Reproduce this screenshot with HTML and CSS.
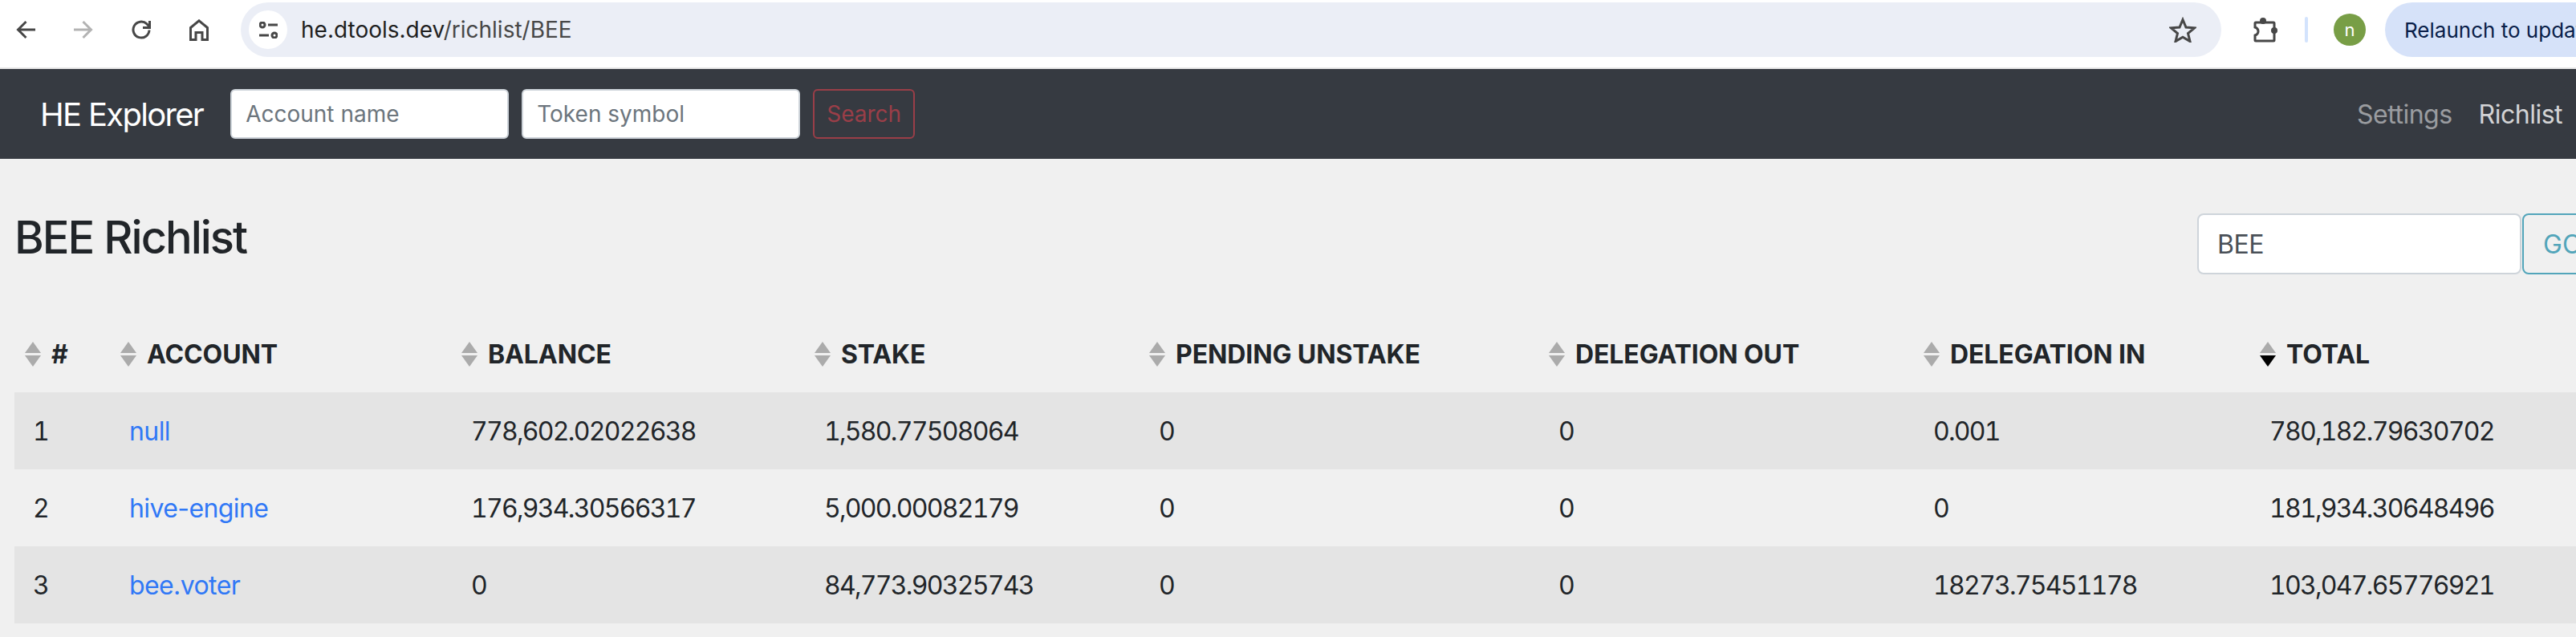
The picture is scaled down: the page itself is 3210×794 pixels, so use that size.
FILE: index.html
```html
<!DOCTYPE html>
<html lang="en">
<head>
<meta charset="utf-8">
<title>BEE Richlist</title>
<link rel="stylesheet" href="styles.css">
</head>
<body>
<header class="toolbar">
  <svg class="tb-icon" viewBox="0 0 24 24"><path class="ic" d="M24 12H3M12.5 2 2.5 12l10 10"/></svg>
  <svg class="tb-icon dim" viewBox="0 0 24 24"><path class="ic" d="M0 12h21M11.5 2l10 10-10 10"/></svg>
  <svg class="tb-icon" viewBox="0 0 24 24"><path class="ic" d="M22 12.5a10 10 0 1 1-3.2-7.8L22 8"/><path class="ic" d="M22.5 1v8.5H14"/></svg>
  <svg class="tb-icon home" viewBox="0 0 24 27"><path class="ic" d="M1.500 25.500V10.500L12 1.800l10.500 8.700v15h-6.500v-9H8v9z"/></svg>
  <div class="omnibox">
    <span class="site-chip">
      <svg class="tune" viewBox="0 0 23 21"><circle class="ic2" cx="4" cy="4" r="3"/><path class="ic2" d="M11 4h12M0 17h12"/><circle class="ic2" cx="19" cy="17" r="3"/></svg>
    </span>
    <span class="url">he.dtools.dev<span class="url-path">/richlist/BEE</span></span>
    <svg class="star" viewBox="0 0 34 32"><path class="ic" d="M17 3.500l4 9.500 10.500.8-8 6.800 2.500 10L17 25.200 8 30.600l2.500-10-8-6.800L13 13z"/></svg>
  </div>
  <svg class="puzzle" viewBox="0 0 32 32"><path class="ic" d="M5 7h22a1 1 0 0 1 1 1v21a1 1 0 0 1-1 1H5a1 1 0 0 1-1-1v-6c3-1 4-3 4-5s-1-4-4-5V8a1 1 0 0 1 1-1z"/><circle class="dot" cx="14" cy="5" r="4"/><circle class="dot" cx="28" cy="17" r="4"/></svg>
  <span class="tb-divider"></span>
  <span class="avatar">n</span>
  <span class="relaunch">Relaunch to update</span>
</header>

<nav class="navbar">
  <a class="brand">HE Explorer</a>
  <input class="nav-input" placeholder="Account name">
  <input class="nav-input" placeholder="Token symbol">
  <button class="nav-search">Search</button>
  <div class="nav-links">
    <a class="nav-link">Settings</a>
    <a class="nav-link active">Richlist</a>
  </div>
</nav>

<main class="content">
  <div class="title-row">
    <h3 class="title">BEE Richlist</h3>
    <div class="go-group">
      <input class="go-input" value="BEE">
      <button class="go-btn">GO</button>
    </div>
  </div>
  <table class="rich">
    <colgroup>
      <col class="c1"><col class="c2"><col class="c3"><col class="c4"><col class="c5"><col class="c6"><col class="c7"><col class="c8">
    </colgroup>
    <thead>
      <tr>
        <th class="first"><span class="th"><svg class="sort" viewBox="0 0 20 31"><path d="M10 0l10 14H0z"/><path d="M0 17h20L10 31z"/></svg>#</span></th>
        <th><span class="th"><svg class="sort" viewBox="0 0 20 31"><path d="M10 0l10 14H0z"/><path d="M0 17h20L10 31z"/></svg>ACCOUNT</span></th>
        <th><span class="th"><svg class="sort" viewBox="0 0 20 31"><path d="M10 0l10 14H0z"/><path d="M0 17h20L10 31z"/></svg>BALANCE</span></th>
        <th><span class="th"><svg class="sort" viewBox="0 0 20 31"><path d="M10 0l10 14H0z"/><path d="M0 17h20L10 31z"/></svg>STAKE</span></th>
        <th><span class="th"><svg class="sort" viewBox="0 0 20 31"><path d="M10 0l10 14H0z"/><path d="M0 17h20L10 31z"/></svg>PENDING UNSTAKE</span></th>
        <th><span class="th"><svg class="sort" viewBox="0 0 20 31"><path d="M10 0l10 14H0z"/><path d="M0 17h20L10 31z"/></svg>DELEGATION OUT</span></th>
        <th><span class="th"><svg class="sort" viewBox="0 0 20 31"><path d="M10 0l10 14H0z"/><path d="M0 17h20L10 31z"/></svg>DELEGATION IN</span></th>
        <th><span class="th"><svg class="sort" viewBox="0 0 20 31"><path d="M10 0l10 14H0z"/><path class="on" d="M0 17h20L10 31z"/></svg>TOTAL</span></th>
      </tr>
    </thead>
    <tbody>
      <tr><td>1</td><td class="acct-cell"><a class="acct">null</a></td><td>778,602.02022638</td><td>1,580.77508064</td><td>0</td><td>0</td><td>0.001</td><td>780,182.79630702</td></tr>
      <tr><td>2</td><td class="acct-cell"><a class="acct">hive-engine</a></td><td>176,934.30566317</td><td>5,000.00082179</td><td>0</td><td>0</td><td>0</td><td>181,934.30648496</td></tr>
      <tr><td>3</td><td class="acct-cell"><a class="acct">bee.voter</a></td><td>0</td><td>84,773.90325743</td><td>0</td><td>0</td><td>18273.75451178</td><td>103,047.65776921</td></tr>
    </tbody>
  </table>
</main>
</body>
</html>
```
FILE: styles.css
```css
* { box-sizing: border-box; }
html, body { margin: 0; padding: 0; }
body {
  width: 3210px;
  height: 794px;
  overflow: hidden;
  background: #f0f0f0;
  color: #212529;
  font-family: Inter, "Liberation Sans", sans-serif;
  font-size: 32px;
}

/* browser toolbar */
.toolbar {
  height: 86px;
  padding: 4px 0 14px 20px;
  background: #fff;
  border-bottom: 2px solid #e8e8e8;
  display: flex;
  align-items: center;
  overflow: hidden;
}
.ic { fill: none; stroke: #474747; stroke-width: 3; }
.ic2 { fill: none; stroke: #474747; stroke-width: 3; }
.dot { fill: #474747; }
.tb-icon { width: 24px; height: 24px; margin-right: 48px; flex: none; }
.tb-icon.dim .ic { stroke: #b3b3b3; }
.tb-icon.home { height: 27px; margin-right: 40px; }
.omnibox {
  flex: 0 0 2468px;
  height: 68px;
  border-radius: 34px;
  background: #ebeef6;
  display: flex;
  align-items: center;
  padding: 0 31px 0 10px;
}
.site-chip {
  width: 48px;
  height: 48px;
  border-radius: 50%;
  background: #fff;
  display: flex;
  align-items: center;
  justify-content: center;
}
.tune { width: 23px; height: 21px; }
.url { margin-left: 17px; font-size: 28px; color: #1f1f1f; }
.url-path { color: #474747; }
.star { width: 34px; height: 32px; margin-left: auto; }
.puzzle { width: 32px; height: 32px; margin-left: 38px; flex: none; }
.tb-divider { width: 4px; height: 32px; margin-left: 34px; border-radius: 2px; background: #d3e3fd; flex: none; }
.avatar {
  width: 40px;
  height: 40px;
  margin-left: 32px;
  border-radius: 50%;
  background: #789e46;
  color: #fff;
  font-size: 22px;
  display: flex;
  align-items: center;
  justify-content: center;
  flex: none;
}
.relaunch {
  margin-left: 24px;
  height: 68px;
  padding: 0 40px 0 24px;
  border-radius: 34px;
  background: #d6e2f9;
  color: #0a1f4a;
  font-size: 26px;
  display: flex;
  align-items: center;
  white-space: nowrap;
  flex: none;
}

/* site navbar */
.navbar {
  height: 112px;
  padding: 0 17px 0 50px;
  background: #363a41;
  display: flex;
  align-items: center;
}
.brand { color: #fff; font-size: 40px; letter-spacing: -1.7px; margin-right: 34px; }
.nav-input {
  width: 347px;
  height: 62px;
  margin-right: 16px;
  padding: 0 17px;
  border: 2px solid #ced4da;
  border-radius: 6px;
  background: #fff;
  font: inherit;
  font-size: 28px;
}
.nav-input::placeholder { color: #6c757d; opacity: 1; }
.nav-search {
  width: 127px;
  height: 62px;
  padding: 0;
  border: 2px solid #9a3e48;
  border-radius: 6px;
  background: transparent;
  color: #9a3e48;
  font: inherit;
  font-size: 28px;
}
.nav-links { margin-left: auto; display: flex; gap: 33px; letter-spacing: -0.5px; }
.nav-link { color: rgba(255,255,255,.5); }
.nav-link.active { color: rgba(255,255,255,.8); }

/* page */
.content { padding: 65px 0 0 18px; }
.title-row { display: flex; align-items: flex-start; height: 130px; }
.title {
  flex: 0 0 2720px;
  margin: 0;
  font-size: 56px;
  font-weight: 500;
  letter-spacing: -2px;
  line-height: 67px;
}
.go-group { display: flex; flex: none; margin-top: 3px; }
.go-input {
  width: 404px;
  height: 76px;
  padding: 0 23px;
  border: 2px solid #ced4da;
  border-radius: 8px;
  background: #fff;
  color: #495057;
  font: inherit;
  letter-spacing: -0.5px;
}
.go-btn {
  width: 100px;
  height: 76px;
  margin-left: 1px;
  padding: 0 0 0 24px;
  text-align: left;
  border: 2px solid #52a5ba;
  border-radius: 8px;
  background: transparent;
  color: #52a5ba;
  font: inherit;
}

/* table */
.rich { width: 3192px; table-layout: fixed; border-collapse: collapse; }
.c1 { width: 121px; }
.c2 { width: 425px; }
.c3 { width: 440px; }
.c4 { width: 417px; }
.c5 { width: 498px; }
.c6 { width: 467px; }
.c7 { width: 419px; }
.c8 { width: 405px; }
th {
  height: 96px;
  padding: 0 0 0 11px;
  text-align: left;
  font-size: 32px;
  font-weight: 700;
  letter-spacing: -0.1px;
  white-space: nowrap;
}
th.first { padding-left: 13px; }
.th { display: flex; align-items: center; gap: 13px; }
.sort { width: 20px; height: 31px; fill: #ababab; flex: none; }
.sort .on { fill: #000; }
td {
  height: 96px;
  padding: 0 0 0 23px;
  white-space: nowrap;
  font-variant-numeric: tabular-nums;
  letter-spacing: -1.75px;
}
td.acct-cell {
  padding-left: 22px;
  font-variant-numeric: normal;
  letter-spacing: -0.6px;
}
tbody tr:nth-child(odd) { background: #e4e4e4; }
.acct { color: #3078f6; }
```
